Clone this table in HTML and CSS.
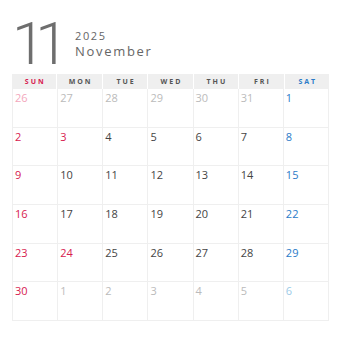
FILE: index.html
```html
<!DOCTYPE html>
<html>
<head>
<meta charset="utf-8">
<link rel="stylesheet" href="styles.css">
</head>
<body>
<div class="page">
  <div class="title">
    <div class="month-num">11</div>
    <div class="month-meta">
      <div class="year">2025</div>
      <div class="month-name">November</div>
    </div>
  </div>
  <div class="weekdays">
    <div class="wd sun">SUN</div>
    <div class="wd">MON</div>
    <div class="wd">TUE</div>
    <div class="wd">WED</div>
    <div class="wd">THU</div>
    <div class="wd">FRI</div>
    <div class="wd sat">SAT</div>
  </div>
  <div class="days">
    <div class="day sun other">26</div><div class="day other">27</div><div class="day other">28</div><div class="day other">29</div><div class="day other">30</div><div class="day other">31</div><div class="day sat">1</div>
    <div class="day sun">2</div><div class="day sun">3</div><div class="day">4</div><div class="day">5</div><div class="day">6</div><div class="day">7</div><div class="day sat">8</div>
    <div class="day sun">9</div><div class="day">10</div><div class="day">11</div><div class="day">12</div><div class="day">13</div><div class="day">14</div><div class="day sat">15</div>
    <div class="day sun">16</div><div class="day">17</div><div class="day">18</div><div class="day">19</div><div class="day">20</div><div class="day">21</div><div class="day sat">22</div>
    <div class="day sun">23</div><div class="day sun">24</div><div class="day">25</div><div class="day">26</div><div class="day">27</div><div class="day">28</div><div class="day sat">29</div>
    <div class="day sun">30</div><div class="day other">1</div><div class="day other">2</div><div class="day other">3</div><div class="day other">4</div><div class="day other">5</div><div class="day sat other">6</div>
  </div>
</div>
</body>
</html>
```
FILE: styles.css
```css
html, body {
  margin: 0;
  padding: 0;
  background: #fff;
}
.page {
  width: 317px;
  padding: 0 0 0 12px;
  font-family: "Open Sans", "Liberation Sans", sans-serif;
}
.title {
  height: 74px;
  display: flex;
  align-items: flex-start;
}
.month-num {
  font-family: Roboto, "Noto Sans", sans-serif;
  font-weight: 300;
  font-size: 60px;
  line-height: 50px;
  height: 50px;
  letter-spacing: -10px;
  color: #6e6e6e;
  margin: 19px 0 0 0;
  width: 63px;
}
.month-meta {
  margin-top: 29px;
  color: #666;
}
.year {
  font-size: 11px;
  letter-spacing: 1.6px;
  line-height: 13px;
}
.month-name {
  font-size: 13px;
  letter-spacing: 1.7px;
  line-height: 16px;
  margin-top: 1px;
}
.weekdays {
  display: grid;
  grid-template-columns: repeat(7, 1fr);
  column-gap: 1px;
  height: 15px;
}
.wd {
  background: #efefef;
  font-size: 7px;
  font-weight: 700;
  letter-spacing: 2px;
  color: #555;
  display: flex;
  align-items: center;
  justify-content: center;
  padding-left: 2px;
}
.wd.sun { color: #d7204f; }
.wd.sat { color: #2a7bc8; }
.days {
  display: grid;
  grid-template-columns: repeat(7, 1fr);
  grid-template-rows: repeat(6, 1fr);
  gap: 1px;
  height: 232px;
  box-sizing: border-box;
  background: #efefef;
  border: 1px solid #efefef;
  border-top: 0;
}
.day {
  background: #fff;
  font-size: 11px;
  line-height: 11px;
  padding: 3px 0 0 2px;
  color: #444;
}
.day.sun { color: #d7204f; }
.day.sat { color: #2a7bc8; }
.day.other { color: #bbb; }
.day.sun.other { color: #f3a7bc; }
.day.sat.other { color: #9ccbe8; }
```
